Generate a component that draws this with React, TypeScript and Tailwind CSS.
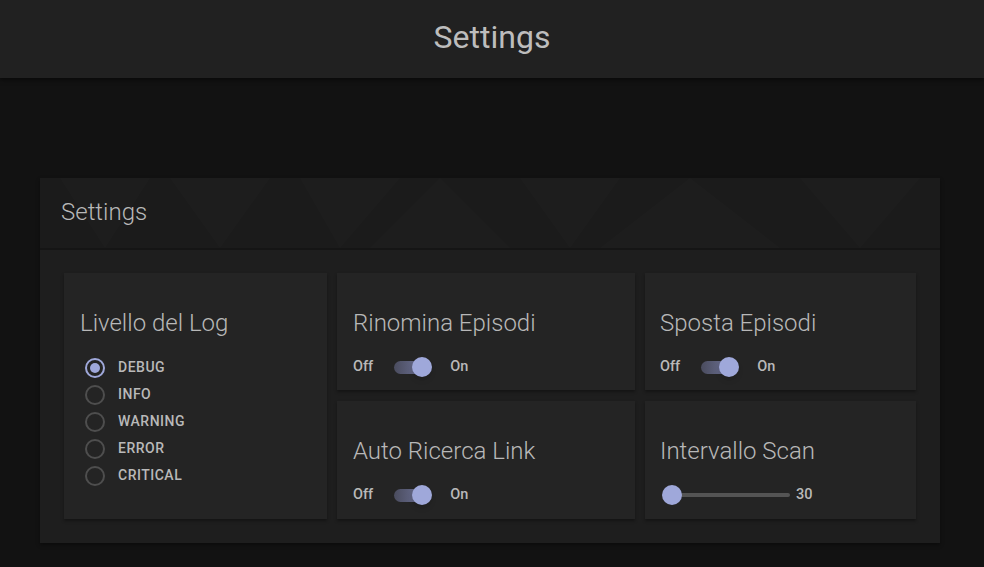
import { useState } from "react";

const LEVELS = ["DEBUG", "INFO", "WARNING", "ERROR", "CRITICAL"];

function Radio({ label, checked, onClick }: { label: string; checked: boolean; onClick: () => void }) {
  return (
    <button onClick={onClick} className="flex items-center h-[27px] gap-[13px] text-left">
      <span
        className={
          "w-[20px] h-[20px] rounded-full border-2 flex items-center justify-center " +
          (checked ? "border-[#9fa8da]" : "border-[#4e4e4e]")
        }
      >
        {checked && <span className="w-[10px] h-[10px] rounded-full bg-[#9fa8da]" />}
      </span>
      <span className="text-[14px] font-medium tracking-[0.5px] text-[#b9b9b9]">{label}</span>
    </button>
  );
}

function Toggle({ on, onClick }: { on: boolean; onClick: () => void }) {
  return (
    <div className="flex items-center h-[24px] text-[14.5px] font-medium text-[#b9b9b9]">
      <span>Off</span>
      <button onClick={onClick} className="relative ml-[21px] mr-[18px] w-[38px] h-[24px] flex items-center">
        <span
          className={
            "w-[34px] h-[13px] rounded-full " +
            (on ? "bg-gradient-to-r from-[#4a4c5e] to-[#7378a0]" : "bg-[#555555]")
          }
        />
        <span
          className={
            "absolute top-[2px] w-[20px] h-[20px] rounded-full shadow-md " +
            (on ? "left-[18px] bg-[#9fa8da]" : "left-[0px] bg-[#bdbdbd]")
          }
        />
      </button>
      <span>On</span>
    </div>
  );
}

function Panel({ title, children, className = "" }: { title: string; children: React.ReactNode; className?: string }) {
  return (
    <div className={"bg-[#242424] shadow-[0_2px_3px_rgba(0,0,0,0.35)] pt-[34px] " + className}>
      <div className="text-[24px] leading-[32px] text-[#b8b8b8] font-light">{title}</div>
      <div className="mt-[16px]">{children}</div>
    </div>
  );
}

export default function App() {
  const [level, setLevel] = useState("DEBUG");
  const [rename, setRename] = useState(true);
  const [move, setMove] = useState(true);
  const [auto, setAuto] = useState(true);

  return (
    <div className="min-h-[567px] bg-[#121212] font-['Roboto','Liberation_Sans',sans-serif]">
      <div className="h-[78px] bg-[#212121] flex items-center justify-center shadow-[0_2px_4px_rgba(0,0,0,0.5)] relative z-10">
        <h1 className="text-[32px] text-[#bdbdbd] font-normal mt-[-4px]">Settings</h1>
      </div>

      <div className="px-[40px] pt-[100px]">
        <div className="w-[900px] bg-[#1e1e1e] shadow-[0_2px_4px_rgba(0,0,0,0.4)]">
          <div className="relative h-[72px] bg-[#1b1b1b] border-b-2 border-[#151515] overflow-hidden flex items-center px-[21px]">
            <svg className="absolute inset-0 w-full h-full" viewBox="0 0 900 70" preserveAspectRatio="none">
              <g fill="#ffffff" opacity="0.007">
                <polygon points="20,0 110,0 65,70" />
                <polygon points="130,0 230,0 180,70" />
                <polygon points="260,0 360,0 300,70" />
                <polygon points="400,0 470,70 330,70" />
                <polygon points="480,0 580,0 530,70" />
                <polygon points="650,0 740,70 560,70" />
                <polygon points="760,0 880,0 820,70" />
              </g>
            </svg>
            <span className="relative text-[24px] font-light text-[#b8b8b8] mt-[-2px]">Settings</span>
          </div>

          <div className="px-[24px] pt-[23px] pb-[24px] grid grid-cols-[263px_298px_271px] grid-rows-[117px_118px] gap-x-[10px] gap-y-[11px]">
            <Panel title="Livello del Log" className="row-span-2 pl-[16px]">
              <div className="flex flex-col mt-[-1px] ml-[5px]">
                {LEVELS.map((l) => (
                  <Radio key={l} label={l} checked={level === l} onClick={() => setLevel(l)} />
                ))}
              </div>
            </Panel>
            <Panel title="Rinomina Episodi" className="pl-[16px]">
              <Toggle on={rename} onClick={() => setRename(!rename)} />
            </Panel>
            <Panel title="Sposta Episodi" className="pl-[15px]">
              <Toggle on={move} onClick={() => setMove(!move)} />
            </Panel>
            <Panel title="Auto Ricerca Link" className="pl-[16px]">
              <Toggle on={auto} onClick={() => setAuto(!auto)} />
            </Panel>
            <Panel title="Intervallo Scan" className="pl-[15px]">
              <div className="flex items-center h-[24px]">
                <div className="relative w-[130px] h-[24px] flex items-center">
                  <span className="absolute left-[12px] right-0 h-[4px] rounded-full bg-[#545454]" />
                  <span className="absolute left-[2px] w-[20px] h-[20px] rounded-full bg-[#9fa8da]" />
                </div>
                <span className="ml-[6px] text-[14.5px] font-medium text-[#b9b9b9]">30</span>
              </div>
            </Panel>
          </div>
        </div>
      </div>
    </div>
  );
}
